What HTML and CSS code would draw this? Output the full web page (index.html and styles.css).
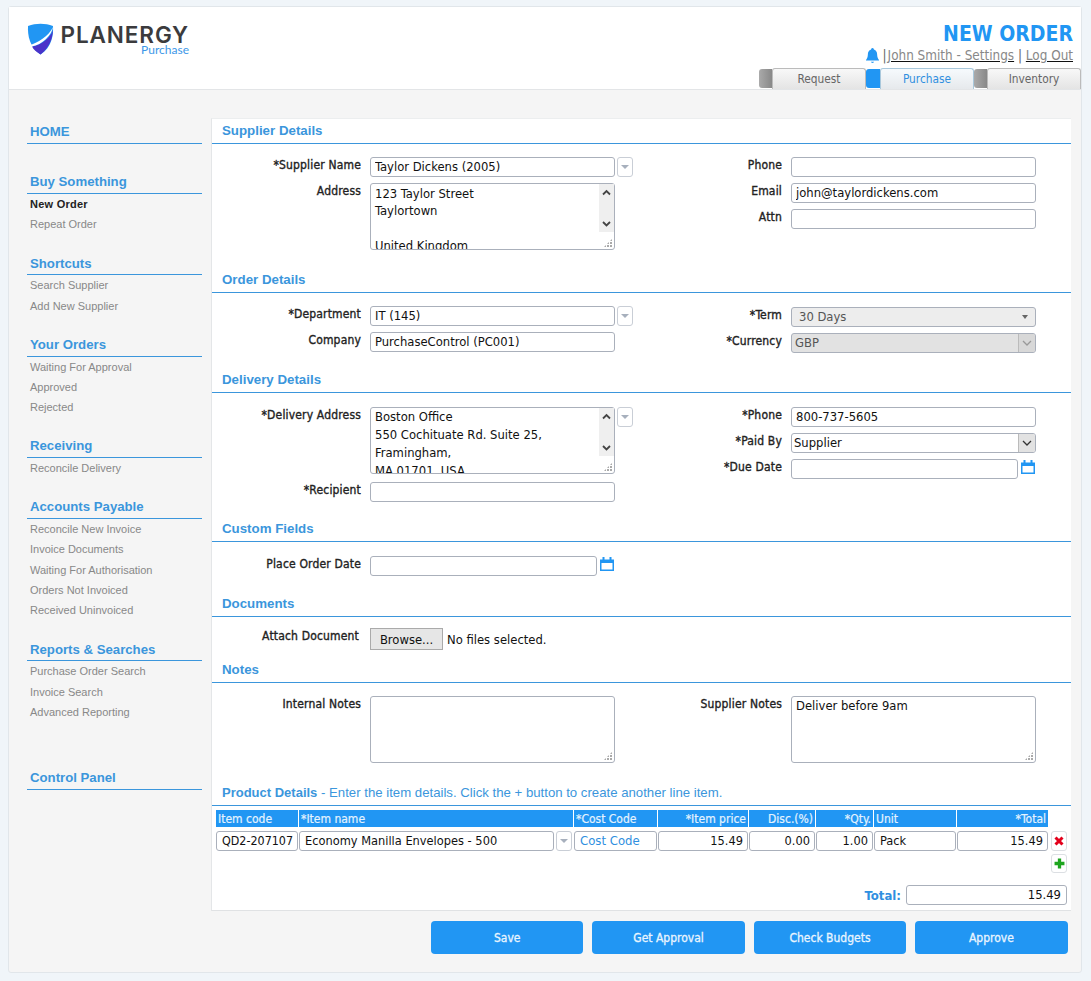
FILE: index.html
```html
<!DOCTYPE html>
<html lang="en">
<head>
<meta charset="utf-8">
<title>New Order</title>
<link rel="stylesheet" href="styles.css">
</head>
<body>
<div class="app">
  <header class="top">
    <div class="logo">
      <svg class="shield" width="27" height="32" viewBox="0 0 27 32"><path d="M1 3C9 0 18 0 26 3C26.500 12 25 24 13.500 31.500C3 25 .5 13 1 3Z" fill="#2196f3"/><path d="M5 23.500C15 22 24 14 26 7C25.500 16 22 25 13.500 31.500C9.500 29 6.500 26.500 5 23.500Z" fill="#4a33c9"/><path d="M2.500 22C10 20.500 22 13 26 4C25 12 15 22 4.800 23.500Z" fill="#fff"/></svg>
      <div class="brand"><span class="brand-name">PLANERGY</span><span class="brand-sub">Purchase</span></div>
    </div>
    <div class="top-right">
      <h1 class="page-title">NEW ORDER</h1>
      <div class="userline">
        <svg class="bell" width="13" height="15" viewBox="0 0 14 16"><path d="M7 0C8 0 8.500 .8 8.500 1.600C11 2.300 12 4.500 12 7C12 10 13 11.500 14 12.800V13.500H0V12.800C1 11.500 2 10 2 7C2 4.500 3 2.300 5.500 1.600C5.500 .8 6 0 7 0Z" fill="#2196f3"/><path d="M5.300 14.800H8.700C8.500 15.600 7.800 16 7 16C6.200 16 5.500 15.600 5.300 14.800Z" fill="#2196f3"/></svg>
        <span class="sep sep-first">|</span><a class="ulink" href="#">John Smith - Settings</a><span class="sep"> | </span><a class="ulink" href="#">Log Out</a>
      </div>
      <nav class="tabs">
        <span class="tab-stub"></span><a class="tab" href="#">Request</a>
        <span class="tab-stub active"></span><a class="tab active" href="#">Purchase</a>
        <span class="tab-stub"></span><a class="tab" href="#">Inventory</a>
      </nav>
    </div>
  </header>

  <div class="main">
    <aside class="side">
      <div class="nav-group nav-home"><a class="nav-title" href="#">HOME</a></div>
      <div class="nav-group">
        <a class="nav-title" href="#">Buy Something</a>
        <a class="nav-item current" href="#">New Order</a>
        <a class="nav-item" href="#">Repeat Order</a>
      </div>
      <div class="nav-group">
        <a class="nav-title" href="#">Shortcuts</a>
        <a class="nav-item" href="#">Search Supplier</a>
        <a class="nav-item" href="#">Add New Supplier</a>
      </div>
      <div class="nav-group">
        <a class="nav-title" href="#">Your Orders</a>
        <a class="nav-item" href="#">Waiting For Approval</a>
        <a class="nav-item" href="#">Approved</a>
        <a class="nav-item" href="#">Rejected</a>
      </div>
      <div class="nav-group">
        <a class="nav-title" href="#">Receiving</a>
        <a class="nav-item" href="#">Reconcile Delivery</a>
      </div>
      <div class="nav-group">
        <a class="nav-title" href="#">Accounts Payable</a>
        <a class="nav-item" href="#">Reconcile New Invoice</a>
        <a class="nav-item" href="#">Invoice Documents</a>
        <a class="nav-item" href="#">Waiting For Authorisation</a>
        <a class="nav-item" href="#">Orders Not Invoiced</a>
        <a class="nav-item" href="#">Received Uninvoiced</a>
      </div>
      <div class="nav-group">
        <a class="nav-title" href="#">Reports &amp; Searches</a>
        <a class="nav-item" href="#">Purchase Order Search</a>
        <a class="nav-item" href="#">Invoice Search</a>
        <a class="nav-item" href="#">Advanced Reporting</a>
      </div>
      <div class="nav-group nav-control"><a class="nav-title" href="#">Control Panel</a></div>
    </aside>

    <div class="content">
      <form class="panel">
        <h2 class="sec-head sec-first">Supplier Details</h2>
        <div class="cols sec-supplier">
          <div class="col">
            <div class="field"><label class="lbl">*Supplier Name</label><div class="ctl"><input class="inp" value="Taylor Dickens (2005)"></div><button type="button" class="drop"><span class="tri"></span></button></div>
            <div class="field"><label class="lbl">Address</label><div class="ctl ta-wrap"><textarea class="ta ta-address">123 Taylor Street
Taylortown

United Kingdom</textarea><span class="sbar"><svg width="15" height="48" viewBox="0 0 15 48"><path d="M4 10.500L7.500 7L11 10.500" fill="none" stroke="#444" stroke-width="1.800"/><path d="M4 38L7.500 41.500L11 38" fill="none" stroke="#444" stroke-width="1.800"/></svg></span><span class="grip"></span></div></div>
          </div>
          <div class="col">
            <div class="field"><label class="lbl">Phone</label><div class="ctl"><input class="inp" value=""></div></div>
            <div class="field"><label class="lbl">Email</label><div class="ctl"><input class="inp" value="john@taylordickens.com"></div></div>
            <div class="field"><label class="lbl">Attn</label><div class="ctl"><input class="inp" value=""></div></div>
          </div>
        </div>

        <h2 class="sec-head">Order Details</h2>
        <div class="cols sec-order">
          <div class="col">
            <div class="field"><label class="lbl">*Department</label><div class="ctl"><input class="inp" value="IT (145)"></div><button type="button" class="drop"><span class="tri"></span></button></div>
            <div class="field"><label class="lbl">Company</label><div class="ctl"><input class="inp" value="PurchaseControl (PC001)"></div></div>
          </div>
          <div class="col col-shift">
            <div class="field"><label class="lbl">*Term</label><div class="ctl sel-box sel-term">30 Days<span class="tri tri-term"></span></div></div>
            <div class="field"><label class="lbl">*Currency</label><div class="ctl sel-box sel-disabled">GBP<span class="sel-btn"><svg width="10" height="6" viewBox="0 0 10 6"><path d="M1 1L5 5L9 1" fill="none" stroke="#999" stroke-width="1.300"/></svg></span></div></div>
          </div>
        </div>

        <h2 class="sec-head">Delivery Details</h2>
        <div class="cols sec-delivery">
          <div class="col">
            <div class="field"><label class="lbl">*Delivery Address</label><div class="ctl ta-wrap"><textarea class="ta ta-delivery">Boston Office
550 Cochituate Rd. Suite 25,
Framingham,
MA 01701, USA</textarea><span class="sbar"><svg width="15" height="48" viewBox="0 0 15 48"><path d="M4 10.500L7.500 7L11 10.500" fill="none" stroke="#444" stroke-width="1.800"/><path d="M4 38L7.500 41.500L11 38" fill="none" stroke="#444" stroke-width="1.800"/></svg></span><span class="grip"></span></div><button type="button" class="drop"><span class="tri"></span></button></div>
            <div class="field field-recipient"><label class="lbl">*Recipient</label><div class="ctl"><input class="inp" value=""></div></div>
          </div>
          <div class="col">
            <div class="field"><label class="lbl">*Phone</label><div class="ctl"><input class="inp" value="800-737-5605"></div></div>
            <div class="field"><label class="lbl">*Paid By</label><div class="ctl sel-box sel-paid">Supplier<span class="sel-btn"><svg width="10" height="6" viewBox="0 0 10 6"><path d="M1 1L5 5L9 1" fill="none" stroke="#333" stroke-width="1.300"/></svg></span></div></div>
            <div class="field"><label class="lbl">*Due Date</label><div class="ctl date-row"><input class="inp" value=""><svg class="cal" width="14" height="14" viewBox="0 0 14 14"><path d="M0 2.500H2.500V0H4.500V2.500H9.500V0H11.500V2.500H14V14H0ZM1.500 6V12.500H12.500V6Z" fill="#2196f3" fill-rule="evenodd"/></svg></div></div>
          </div>
        </div>

        <h2 class="sec-head">Custom Fields</h2>
        <div class="cols sec-custom">
          <div class="col">
            <div class="field"><label class="lbl">Place Order Date</label><div class="ctl date-row"><input class="inp" value=""><svg class="cal" width="14" height="14" viewBox="0 0 14 14"><path d="M0 2.500H2.500V0H4.500V2.500H9.500V0H11.500V2.500H14V14H0ZM1.500 6V12.500H12.500V6Z" fill="#2196f3" fill-rule="evenodd"/></svg></div></div>
          </div>
        </div>

        <h2 class="sec-head">Documents</h2>
        <div class="cols sec-docs">
          <div class="col col-wide">
            <div class="field field-doc"><label class="lbl lbl-doc">Attach Document</label><div class="ctl file-row"><button type="button" class="browse">Browse...</button><span class="file-none">No files selected.</span></div></div>
          </div>
        </div>

        <h2 class="sec-head">Notes</h2>
        <div class="cols sec-notes">
          <div class="col">
            <div class="field"><label class="lbl">Internal Notes</label><div class="ctl ta-wrap"><textarea class="ta"></textarea><span class="grip"></span></div></div>
          </div>
          <div class="col">
            <div class="field"><label class="lbl">Supplier Notes</label><div class="ctl ta-wrap"><textarea class="ta">Deliver before 9am</textarea><span class="grip"></span></div></div>
          </div>
        </div>

        <h2 class="sec-head sec-product"><span class="strong">Product Details</span> - Enter the item details. Click the + button to create another line item.</h2>
        <div class="lines">
          <div class="grid-row grid-head">
            <span class="th">Item code</span><span class="th">*Item name</span><span class="th">*Cost Code</span><span class="th num">*Item price</span><span class="th num">Disc.(%)</span><span class="th num">*Qty.</span><span class="th">Unit</span><span class="th num">*Total</span>
          </div>
          <div class="line-wrap">
            <div class="grid-row grid-line">
              <input class="inp cell cell-code" value="QD2-207107">
              <div class="name-cell"><input class="inp cell" value="Economy Manilla Envelopes - 500"><button type="button" class="drop drop-line"><span class="tri"></span></button></div>
              <input class="inp cell cell-link" value="Cost Code">
              <input class="inp cell cell-num" value="15.49">
              <input class="inp cell cell-num" value="0.00">
              <input class="inp cell cell-num" value="1.00">
              <input class="inp cell" value="Pack">
              <input class="inp cell cell-num" value="15.49">
            </div>
            <div class="row-actions">
              <button type="button" class="act act-del"><svg width="10" height="10" viewBox="0 0 10 10"><path d="M1.500 1.500L8.500 8.500M8.500 1.500L1.500 8.500" stroke="#e3001b" stroke-width="3"/></svg></button>
              <button type="button" class="act act-add"><svg width="11" height="11" viewBox="0 0 10 10"><path d="M5 .5V9.500M.5 5H9.500" stroke="#1ea51e" stroke-width="3"/></svg></button>
            </div>
          </div>
          <div class="total-row"><span class="total-lbl">Total:</span><input class="inp total-inp" value="15.49"></div>
        </div>
      </form>
      <div class="actions">
        <button type="button" class="btn">Save</button>
        <button type="button" class="btn">Get Approval</button>
        <button type="button" class="btn">Check Budgets</button>
        <button type="button" class="btn">Approve</button>
      </div>
    </div>
  </div>
</div>
</body>
</html>
```

FILE: styles.css
```css
* { box-sizing: border-box; }
html, body { margin: 0; padding: 0; }
body {
  background: #f0f5f9;
  padding: 6px 8px 8px;
  font-family: "DejaVu Sans", sans-serif;
  font-stretch: condensed;
  font-size: 12px;
  color: #111;
}
.app { width: 1074px; height: 967px; border: 1px solid #e1e6ea; border-radius: 3px; background: #f5f5f5; display: flex; flex-direction: column; overflow: visible; }

/* header */
.top { height: 83px; background: #fff; border-bottom: 1px solid #e3e5e7; display: flex; justify-content: space-between; flex: none; }
.logo { display: flex; padding: 16px 0 0 18px; align-items: flex-start; }
.shield { flex: none; }
.brand { margin-left: 7px; width: 128px; display: flex; flex-direction: column; align-items: flex-end; }
.brand-name { font-family: "Inter", sans-serif; font-stretch: normal; font-size: 22.500px; line-height: 19px; font-weight: 600; color: #3b3b3d; letter-spacing: .9px; margin-top: 2px; white-space: nowrap; }
.brand-sub { font-family: "Lato", sans-serif; font-stretch: normal; font-size: 12px; line-height: 12px; color: #3c97e8; }
.top-right { display: flex; flex-direction: column; align-items: flex-end; }
.page-title { margin: 14px 8px 0 0; font-size: 21px; line-height: 27px; font-weight: 700; color: #2196f3; }
.userline { margin: -2px 8px 0 0; height: 18px; display: flex; align-items: center; font-size: 13.400px; color: #777; white-space: pre; }
.bell { margin-right: 4px; }
.ulink { color: #888; text-decoration: underline; text-decoration-color: #111; }
.sep { color: #666; }
.sep-first { margin-right: 1px; }
.tabs { display: flex; margin-top: 4px; height: 21px; }
.tab-stub { width: 13px; height: 19px; margin-top: 1px; background: linear-gradient(90deg, #aaa, #888); border-radius: 3px 0 0 3px; }
.tab-stub.active { width: 14px; background: #2196f3; }
.tab { width: 94px; text-align: center; font-size: 11.800px; line-height: 20px; color: #666; text-decoration: none; background: linear-gradient(#f8f8f8, #e4e4e4); border: 1px solid #bbb; border-bottom: 0; border-radius: 3px 3px 0 0; }
.tab.active { color: #2f8fe0; background: linear-gradient(#f6fafd, #e6e9ec); border-color: #a9c8dc; }

/* layout */
.main { flex: 1; display: flex; padding: 28px 10px 0 18px; }
.side { width: 175px; flex: none; }
.content { margin-left: 9px; width: 860px; }

/* side nav */
.nav-title { display: block; height: 40.700px; padding: 20px 0 0 3px; border-bottom: 1px solid #3b96dc; font-family: "Liberation Sans", sans-serif; font-stretch: normal; font-size: 13.200px; font-weight: 700; line-height: 17px; color: #3b96dc; text-decoration: none; }
.nav-item { display: block; height: 20.300px; padding-left: 3px; font-family: "Liberation Sans", sans-serif; font-stretch: normal; font-size: 11px; line-height: 20.300px; color: #888; text-decoration: none; }
.nav-item.current { color: #222; font-weight: 700; letter-spacing: .25px; }
.nav-home { height: 50px; margin-top: -14.700px; }
.nav-control { margin-top: 27px; }

/* panel */
.panel { height: 793px; background: #fff; border: 1px solid #e4e6e8; border-top-color: #eceeef; border-right: 0; border-bottom-color: #e0e2e4; }
.sec-head { margin: 0; height: 26px; padding: 0 0 0 10px; border-bottom: 1px solid #3b96dc; font-family: "Liberation Sans", sans-serif; font-stretch: normal; font-size: 13.300px; font-weight: 700; line-height: 25px; color: #3b96dc; }
.cols { display: grid; grid-template-columns: 421px 1fr; padding-left: 9px; }
.col { display: flex; flex-direction: column; gap: 6px; }
.col-wide { grid-column: 1 / 3; }
.col-shift { padding-top: 1px; }
.sec-first { height: 25px; line-height: 23px; }
.sec-supplier { padding-top: 13px; padding-bottom: 17px; }
.sec-order { padding-top: 13px; padding-bottom: 14px; }
.sec-delivery { padding-top: 14px; padding-bottom: 14px; }
.sec-custom { padding-top: 14px; padding-bottom: 15px; }
.sec-docs { padding-top: 11px; padding-bottom: 7px; }
.sec-notes { padding-top: 13px; padding-bottom: 17px; }

.field { display: flex; align-items: flex-start; }
.lbl { width: 140px; flex: none; margin-right: 9px; text-align: right; font-size: 12px; font-weight: 400; letter-spacing: .17px; -webkit-text-stroke: .35px #222; line-height: 16px; color: #222; }
.lbl-doc { margin-right: 11px; width: 138px; }
.ctl { width: 245px; flex: none; position: relative; }
.field-recipient { margin-top: 2px; }
.inp { display: block; width: 100%; height: 20px; border: 1px solid #aab0bb; border-radius: 3px; background: #fff; padding: 0 5px 1px 4px; font: inherit; font-stretch: condensed; font-size: 12.900px; color: #111; outline: 0; }
.ta-wrap { height: 67px; }
.ta { display: block; width: 100%; height: 67px; padding: 0 5px 0 4px; border: 1px solid #aab0bb; border-radius: 3px; background: #fff; resize: none; overflow: hidden; font: inherit; font-stretch: condensed; font-size: 12.900px; line-height: 18px; color: #111; outline: 0; }
.ta-address { padding-top: 1px; line-height: 17.400px; }
.sbar { position: absolute; right: 1px; top: 1px; width: 15px; height: 48px; background: #efefef; display: block; }
.sbar svg { display: block; }
.grip { position: absolute; right: 3px; bottom: 3px; width: 8px; height: 8px; background-image: radial-gradient(circle at 1px 1px, #aaa 1px, transparent 1.100px); background-size: 3px 3px; clip-path: polygon(100% 0, 100% 100%, 0 100%); }
.drop { margin-left: 2px; flex: none; width: 16px; height: 20px; padding: 0; background: #fff; border: 1px solid #c9ced6; border-radius: 3px; display: flex; align-items: center; justify-content: center; }
.tri { display: block; width: 0; height: 0; border-left: 4.500px solid transparent; border-right: 4.500px solid transparent; border-top: 4.500px solid #a7b0bd; }
.sel-box { height: 20px; border: 1px solid #aab0bb; border-radius: 3px; font-size: 12.900px; line-height: 17px; }
.sel-term { background: #ededed; color: #555; padding-left: 7px; }
.tri-term { position: absolute; right: 7px; top: 7px; border-left-width: 3px; border-right-width: 3px; border-top: 4px solid #666; }
.sel-disabled { background: #e2e2e2; color: #555; padding-left: 3px; }
.sel-paid { background: #fff; padding-left: 2px; color: #111; }
.sel-btn { position: absolute; right: 0; top: 0; width: 17px; height: 18px; background: #e2e2e2; border-left: 1px solid #bbb; display: flex; align-items: center; justify-content: center; border-radius: 0 2px 2px 0; }
.sel-disabled .sel-btn { background: #d8d8d8; }
.date-row { display: flex; align-items: flex-start; }
.date-row .inp { flex: 1; }
.date-row .cal { flex: none; margin: 1px 1px 0 3px; }
.field-doc .ctl { width: 400px; }
.file-row { display: flex; align-items: center; gap: 4px; }
.browse { width: 73px; height: 22px; background: #e6e6e6; border: 1px solid #aaa; padding: 0; font: inherit; font-stretch: condensed; font-size: 12.900px; color: #111; }
.file-none { font-size: 12.900px; }

/* lines table */
.sec-product { font-weight: 400; font-size: 13.200px; height: 26px; }
.strong { font-weight: 700; font-size: 13px; }
.lines { padding: 4px 4px 0 4px; }
.grid-row { display: grid; grid-template-columns: 82px 274px 83px 90px 66px 57px 82px 91px; column-gap: 1px; width: 832px; }
.grid-head { height: 17px; }
.th { background: #2196f3; color: #e4f3ff; font-size: 12px; -webkit-text-stroke: .2px #e4f3ff; line-height: 17px; padding: 1px 2px 0; height: 17px; font-weight: 400; }
.num { text-align: right; }
.line-wrap { display: flex; align-items: flex-start; margin-top: 4px; height: 42px; }
.grid-line { height: 20px; }
.name-cell { display: flex; }
.name-cell .inp { flex: 1; min-width: 0; }
.drop-line { margin-right: 1px; }
.cell { height: 20px; font-size: 12.700px; padding: 0 3px 1px 5px; }
.cell-code { font-size: 12.400px; }
.cell-num { text-align: right; padding-right: 4px; }
.cell-link { color: #2f8fe0; font-size: 13px; }
.row-actions { margin-left: 3px; display: flex; flex-direction: column; gap: 3px; }
.act { width: 16px; height: 20px; padding: 0; background: #fff; border: 1px solid #dcdfe3; border-radius: 3px; display: flex; align-items: center; justify-content: center; }
.act-add { height: 19px; }
.total-row { display: flex; justify-content: flex-end; align-items: center; margin-top: 12px; gap: 5px; width: 851px; }
.total-lbl { color: #2f8fe0; font-weight: 700; font-size: 13px; }
.total-inp { width: 161px; text-align: right; padding-right: 5px; }

/* buttons */
.actions { display: flex; gap: 9px; margin-top: 10px; padding-left: 220px; }
.btn { width: 152.400px; height: 33px; border: 0; border-radius: 4px; background: #2196f3; color: #e9f5ff; font: inherit; font-stretch: condensed; font-size: 12px; font-weight: 400; -webkit-text-stroke: .3px #e9f5ff; padding: 0; }
```
